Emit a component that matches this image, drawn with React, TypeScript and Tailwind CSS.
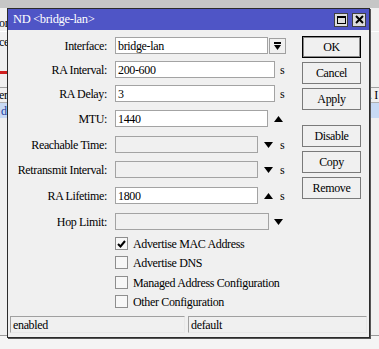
import React from "react";

const F = "[font-family:'Liberation_Serif','Times_New_Roman',serif] text-[12px] tracking-[-0.35px] leading-none text-black";

function Down() {
  return (
    <svg width="9" height="6" viewBox="0 0 9 6" className="shrink-0">
      <polygon points="0,0 9,0 4.5,6" fill="#000" />
    </svg>
  );
}
function Up() {
  return (
    <svg width="9" height="6" viewBox="0 0 9 6" className="shrink-0">
      <polygon points="0,6 9,6 4.5,0" fill="#000" />
    </svg>
  );
}

function Label({ children }: { children: React.ReactNode }) {
  return <div className="w-[99px] text-right shrink-0">{children}</div>;
}

function Btn({ children, def }: { children: React.ReactNode; def?: boolean }) {
  return (
    <div
      className={
        def
          ? "h-[22px] w-[59px] flex items-center justify-center border border-black bg-[#f0f0f0] shadow-[inset_0_0_0_1px_#8a8a8a]"
          : "h-[22px] w-[59px] flex items-center justify-center border border-[#7a7a7a] bg-[#f0f0f0]"
      }
    >
      {children}
    </div>
  );
}

function Check({ checked, label, cls }: { checked?: boolean; label: string; cls: string }) {
  return (
    <div className={"flex items-center h-[13px] pl-[107px] " + cls}>
      <div className="w-[13px] h-[13px] border border-[#8e8e8e] bg-[#f7f7f7] flex items-center justify-center shrink-0">
        {checked && (
          <svg width="9" height="8" viewBox="0 0 9 8">
            <path d="M1 4 L3.5 6.5 L8 1" stroke="#000" strokeWidth="2" fill="none" />
          </svg>
        )}
      </div>
      <span className="ml-[5px]">{label}</span>
    </div>
  );
}

export default function App() {
  return (
    <div className={"relative w-[379px] h-[349px] overflow-hidden bg-[#f0f0f0] " + F}>
      {/* background window content */}
      <div className="flex flex-col w-full h-full">
        <div className="h-[8px] bg-[#c6c6c6] shrink-0" />
        <div className="h-[7px]" />
        <div className="h-[16px] flex items-center w-[7px] overflow-hidden">
          <span className="ml-[-1px]">or</span>
        </div>
        <div className="h-[1px] bg-white" />
        <div className="h-[20px] flex items-center w-[7px] overflow-hidden">
          <span className="ml-[-1px]">ce</span>
        </div>
        <div className="h-[19px]" />
        <div className="h-[3px] bg-[#d02020] w-[7px]" />
        <div className="h-[13px]" />
        <div className="h-[1px] bg-[#a0a0a0]" />
        <div className="h-[14px] flex items-center justify-between">
          <div className="w-[7px] overflow-hidden"><span className="ml-[-1px]">er</span></div>
          <span className="mr-[1px]">. I</span>
        </div>
        <div className="h-[1px] bg-[#b0b0b0]" />
        <div className="h-[15px] bg-[#c8daf4] flex items-center">
          <span className="ml-[1px] text-[#2040a0]">d</span>
        </div>
        <div className="flex-1" />
        <div className="h-[1px] bg-[#9a9a9a]" />
        <div className="h-[13px] bg-[#f4f4f4]" />
      </div>

      {/* dialog window */}
      <div className="absolute left-[7px] top-[8px] w-[363px] h-[330px] border border-[#2b2b2b] bg-[#f0f0f0] flex flex-col shadow-[1px_1px_0_#555]">
        <div className="h-[21px] bg-[#4f55c6] flex items-center justify-between shrink-0">
          <span className="ml-[5px] text-white text-[12.5px]">ND &lt;bridge-lan&gt;</span>
          <div className="flex items-center gap-[4px] mr-[3px]">
            <div className="w-[14px] h-[14px] bg-[#dcdcdc] border border-[#404040] flex items-center justify-center">
              <div className="w-[9px] h-[8px] border border-black border-t-2" />
            </div>
            <div className="w-[14px] h-[14px] bg-[#dcdcdc] border border-[#404040] flex items-center justify-center">
              <svg width="9" height="9" viewBox="0 0 9 9">
                <path d="M1 1 L8 8 M8 1 L1 8" stroke="#000" strokeWidth="2" />
              </svg>
            </div>
          </div>
        </div>

        <div className="flex flex-1">
          <div className="flex flex-col flex-1">
            <div className="flex items-center h-[17px] mt-[7px]">
              <Label>Interface:</Label>
              <div className="ml-[8px] w-[153px] h-[17px] border border-[#a3a3a3] bg-white flex items-center px-[2px]">bridge-lan</div>
              <div className="ml-[1px] w-[17px] h-[16px] border border-[#a0a0a0] bg-[#f0f0f0] flex flex-col items-center justify-center gap-[1px]">
                <div className="w-[7px] h-[2px] bg-black" />
                <svg width="7" height="5" viewBox="0 0 7 5">
                  <polygon points="0,0 7,0 3.5,5" fill="#000" />
                </svg>
              </div>
            </div>
            <div className="flex items-center h-[17px] mt-[7px]">
              <Label>RA Interval:</Label>
              <div className="ml-[8px] w-[160px] h-[17px] border border-[#a3a3a3] bg-white flex items-center px-[2px]">200-600</div>
              <span className="ml-[5px]">s</span>
            </div>
            <div className="flex items-center h-[17px] mt-[7px]">
              <Label>RA Delay:</Label>
              <div className="ml-[8px] w-[160px] h-[17px] border border-[#a3a3a3] bg-white flex items-center px-[2px]">3</div>
              <span className="ml-[5px]">s</span>
            </div>
            <div className="flex items-center h-[17px] mt-[8px]">
              <Label>MTU:</Label>
              <div className="ml-[8px] w-[153px] h-[17px] border border-[#a3a3a3] bg-white flex items-center px-[2px]">1440</div>
              <span className="ml-[6px] flex"><Up /></span>
            </div>
            <div className="flex items-center h-[17px] mt-[9px]">
              <Label>Reachable Time:</Label>
              <div className="ml-[8px] w-[143px] h-[17px] border border-[#a3a3a3] bg-[#f0f0f0]" />
              <span className="ml-[6px] flex"><Down /></span>
              <span className="ml-[7px]">s</span>
            </div>
            <div className="flex items-center h-[17px] mt-[8px]">
              <Label>Retransmit Interval:</Label>
              <div className="ml-[8px] w-[143px] h-[17px] border border-[#a3a3a3] bg-[#f0f0f0]" />
              <span className="ml-[6px] flex"><Down /></span>
              <span className="ml-[7px]">s</span>
            </div>
            <div className="flex items-center h-[17px] mt-[9px]">
              <Label>RA Lifetime:</Label>
              <div className="ml-[8px] w-[143px] h-[17px] border border-[#a3a3a3] bg-white flex items-center px-[2px]">1800</div>
              <span className="ml-[6px] flex"><Up /></span>
              <span className="ml-[7px]">s</span>
            </div>
            <div className="flex items-center h-[17px] mt-[9px]">
              <Label>Hop Limit:</Label>
              <div className="ml-[8px] w-[154px] h-[17px] border border-[#a3a3a3] bg-[#f0f0f0]" />
              <span className="ml-[5px] flex"><Down /></span>
            </div>

            <Check checked label="Advertise MAC Address" cls="mt-[7px]" />
            <Check label="Advertise DNS" cls="mt-[6px]" />
            <Check label="Managed Address Configuration" cls="mt-[7px]" />
            <Check label="Other Configuration" cls="mt-[6px]" />
          </div>

          <div className="flex flex-col w-[59px] mr-[8px] mt-[6px] gap-[4px]">
            <Btn def>OK</Btn>
            <Btn>Cancel</Btn>
            <Btn>Apply</Btn>
            <div className="h-[7px]" />
            <Btn>Disable</Btn>
            <Btn>Copy</Btn>
            <Btn>Remove</Btn>
          </div>
        </div>

        <div className="flex gap-[3px] px-[2px] mb-[4px] h-[17px] shrink-0">
          <div className="w-[175px] h-[17px] border-t border-l border-[#a0a0a0] border-r border-r-[#e8e8e8] border-b border-b-[#e8e8e8] flex items-center px-[2px]">enabled</div>
          <div className="w-[179px] h-[17px] border-t border-l border-[#a0a0a0] border-r border-r-[#e8e8e8] border-b border-b-[#e8e8e8] flex items-center px-[2px]">default</div>
        </div>
      </div>
    </div>
  );
}
